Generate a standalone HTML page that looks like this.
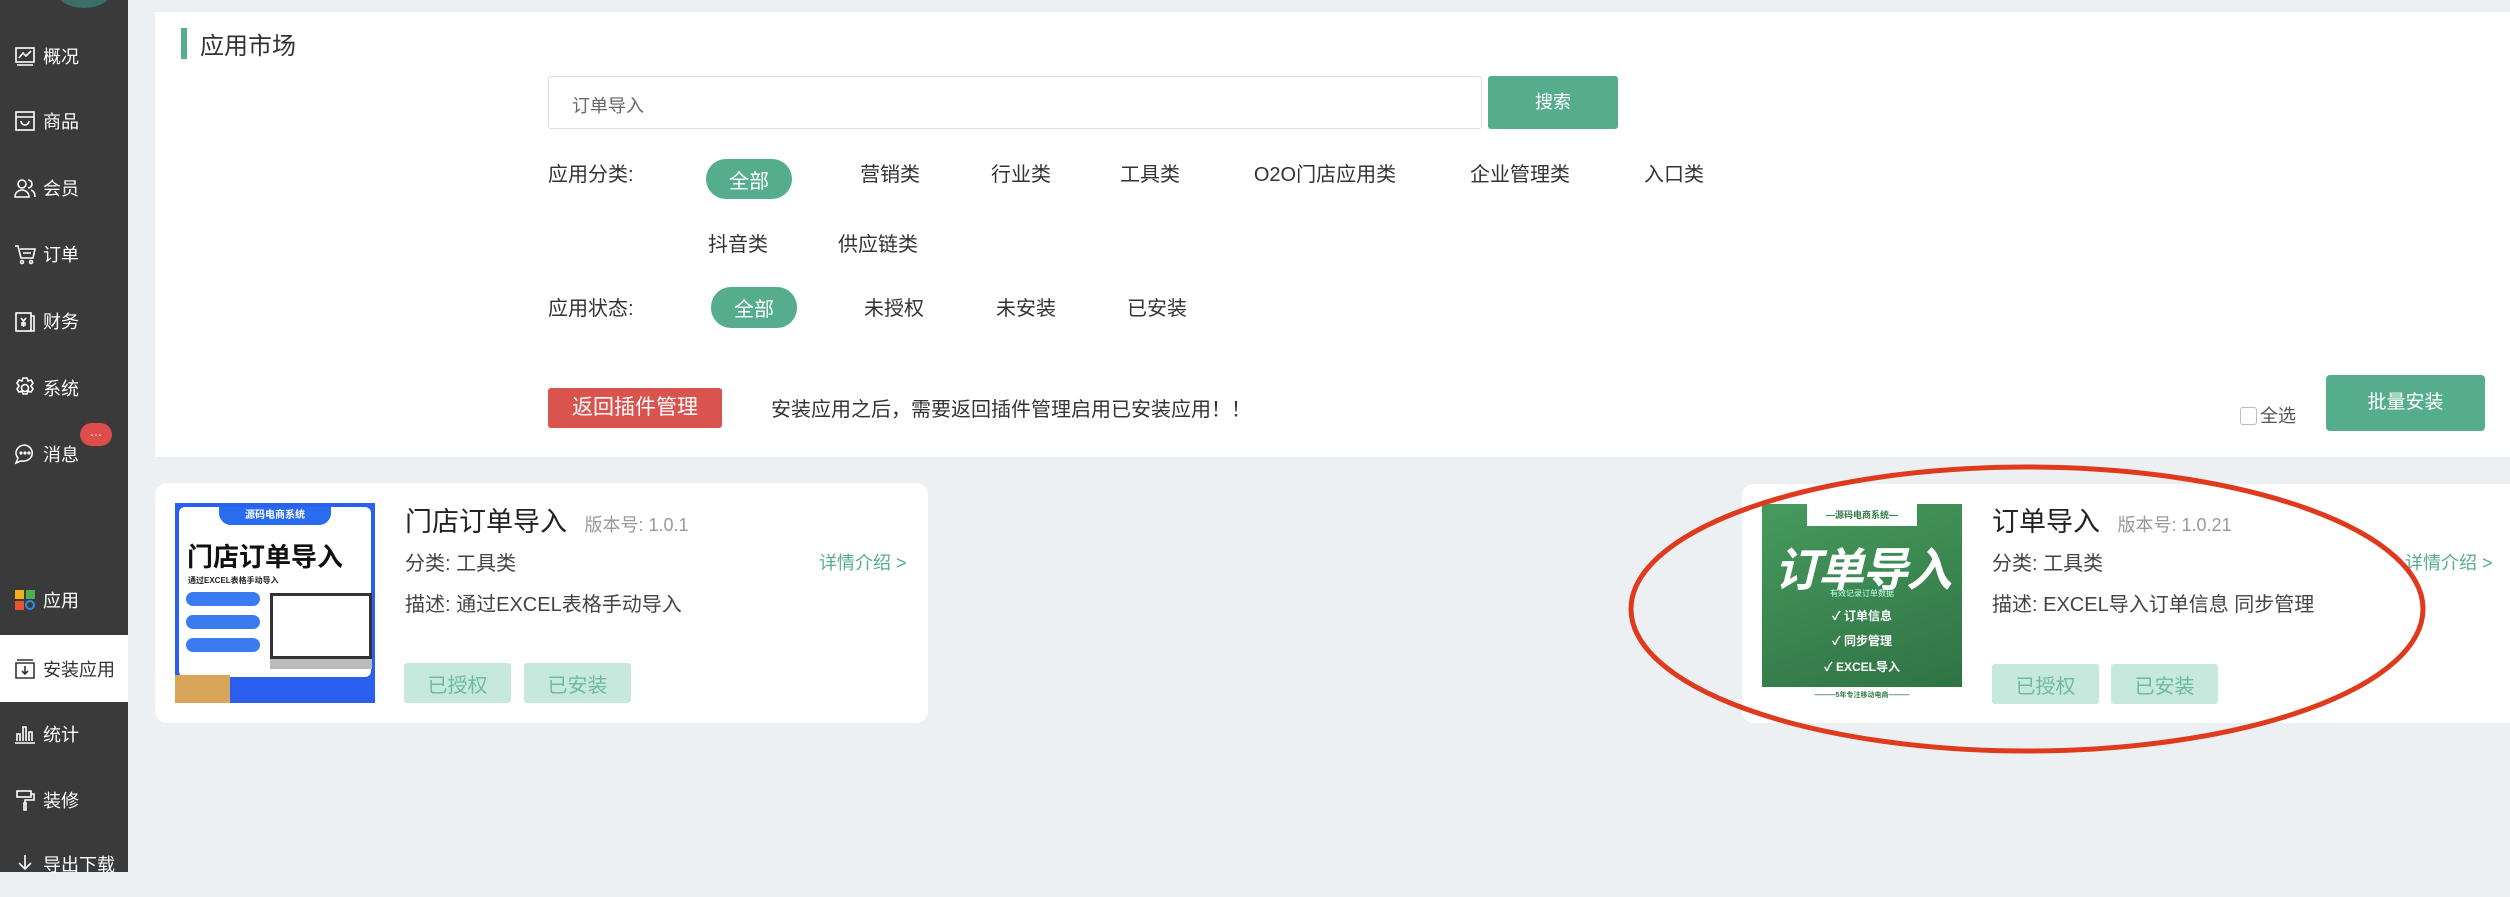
<!DOCTYPE html>
<html><head><meta charset="utf-8"><style>
*{margin:0;padding:0;box-sizing:border-box}
body{width:2510px;height:872px;overflow:hidden;background:#edf0f3;font-family:"Liberation Sans","Noto Sans CJK SC",sans-serif;position:relative;color:#333}
.abs{position:absolute}
.side{left:0;top:0;width:128px;height:872px;background:#3a3a3a}
.nav{position:absolute;left:0;width:128px;height:66px;color:#fff;font-size:18px;display:flex;align-items:center}
.nav svg{position:absolute;left:14px;width:22px;height:22px}
.nav span{position:absolute;left:43px}
.nav.act{background:#fff;color:#333}
.panel{left:155px;top:12px;width:2355px;height:445px;background:#fff}
.t{position:absolute;white-space:nowrap;font-size:20px;color:#333;transform:translateX(-50%)}
.pill{position:absolute;background:#55ad8d;color:#fff;border-radius:20px;font-size:20px;display:flex;align-items:center;justify-content:center}
.card{background:#fff;border-radius:12px}
.btn2{position:absolute;background:#c7e8dc;color:#6dbb9f;font-size:20px;display:flex;align-items:center;justify-content:center;border-radius:3px;width:107px;height:40px}
</style></head><body>
<div class="abs side">
 <div class="abs" style="left:58px;top:-20px;width:52px;height:28px;border-radius:50%;background:#3d6f6a"></div>
 <div class="nav" style="top:23px"><svg viewBox="0 0 22 22" fill="none" stroke="#fff" stroke-width="1.6"><rect x="2" y="3" width="18" height="14"/><path d="M5 13l4-5 3 3 5-5M3 20h16"/></svg><span>概况</span></div>
 <div class="nav" style="top:88px"><svg viewBox="0 0 22 22" fill="none" stroke="#fff" stroke-width="1.6"><rect x="2" y="2" width="18" height="18"/><path d="M2 7h18M7 11a4 4 0 008 0"/></svg><span>商品</span></div>
 <div class="nav" style="top:155px"><svg viewBox="0 0 22 22" fill="none" stroke="#fff" stroke-width="1.6"><circle cx="8" cy="7" r="4"/><path d="M1 20c0-5 4-7 7-7s7 2 7 7zM14 3a4 4 0 010 8M17 13c3 1 4 4 4 7"/></svg><span>会员</span></div>
 <div class="nav" style="top:221px"><svg viewBox="0 0 22 22" fill="none" stroke="#fff" stroke-width="1.6"><path d="M1 3h3l3 12h12l2-9H6M9 10h8"/><circle cx="8" cy="19" r="1.5"/><circle cx="17" cy="19" r="1.5"/></svg><span>订单</span></div>
 <div class="nav" style="top:288px"><svg viewBox="0 0 22 22" fill="none" stroke="#fff" stroke-width="1.6"><rect x="2" y="3" width="15" height="18"/><path d="M17 6h3v15h-3M7 8l2.5 3L12 8M9.5 11v6M7 13h5M7 15h5"/></svg><span>财务</span></div>
 <div class="nav" style="top:355px"><svg viewBox="0 0 22 22" fill="none" stroke="#fff" stroke-width="1.6"><circle cx="11" cy="11" r="3.5"/><path d="M9 1h4l1 3 3-1 2 3-2 3 2 3-2 3-3-1-1 3H9l-1-3-3 1-2-3 2-3-2-3 2-3 3 1z"/></svg><span>系统</span></div>
 <div class="nav" style="top:421px"><svg viewBox="0 0 22 22" fill="none" stroke="#fff" stroke-width="1.6"><path d="M11 2a9 8 0 00-7 13l-2 5 5-2a9 8 0 104-16z"/><circle cx="7" cy="10" r=".8"/><circle cx="11" cy="10" r=".8"/><circle cx="15" cy="10" r=".8"/></svg><span>消息</span></div>
 <div class="abs" style="left:80px;top:423px;width:32px;height:23px;border-radius:12px;background:#e04b4b;color:#fff;font-size:14px;text-align:center;line-height:16px">...</div>
 <div class="nav" style="top:567px"><svg viewBox="0 0 22 22"><rect x="1" y="1" width="9" height="9" fill="#f2b01e"/><rect x="12" y="1" width="9" height="9" fill="#4caf50"/><rect x="1" y="12" width="9" height="9" fill="#e8542f"/><circle cx="16" cy="16" r="4" fill="none" stroke="#2d8cf0" stroke-width="2"/></svg><span>应用</span></div>
 <div class="nav act" style="top:635px;height:67px"><svg viewBox="0 0 22 22" fill="none" stroke="#333" stroke-width="1.6"><path d="M3 2h16M2 5h18v15H2zM11 8v8M8 13l3 3 3-3"/></svg><span>安装应用</span></div>
 <div class="nav" style="top:701px"><svg viewBox="0 0 22 22" fill="none" stroke="#fff" stroke-width="1.6"><path d="M1 20h20M3 18v-7h3v7M9 18V4h3v14M15 18v-9h3v9"/></svg><span>统计</span></div>
 <div class="nav" style="top:767px"><svg viewBox="0 0 22 22" fill="none" stroke="#fff" stroke-width="1.6"><rect x="3" y="2" width="14" height="6"/><path d="M17 5h3v6h-9v3M10 14h2v7h-2z"/></svg><span>装修</span></div>
 <div class="nav" style="top:831px"><svg viewBox="0 0 22 22" fill="none" stroke="#fff" stroke-width="1.6"><path d="M11 2v14M5 10l6 6 6-6"/></svg><span>导出下载</span></div>
</div>

<div class="abs panel"></div>
<div class="abs" style="left:181px;top:28px;width:6px;height:31px;background:#55ad8d"></div>
<div class="abs" style="left:200px;top:26px;font-size:24px;color:#333">应用市场</div>
<div class="abs" style="left:548px;top:76px;width:934px;height:53px;border:1px solid #dcdfe6;border-radius:3px;font-size:18px;color:#666;padding:15px 23px">订单导入</div>
<div class="abs" style="left:1488px;top:76px;width:130px;height:53px;background:#55ad8d;border-radius:3px;color:#fff;font-size:18px;text-align:center;line-height:53px">搜索</div>

<div class="abs" style="left:548px;top:158px;font-size:20px">应用分类:</div>
<div class="pill" style="left:706px;top:159px;width:86px;height:40px">全部</div>
<div class="t" style="left:890px;top:158px">营销类</div>
<div class="t" style="left:1021px;top:158px">行业类</div>
<div class="t" style="left:1150px;top:158px">工具类</div>
<div class="t" style="left:1325px;top:158px">O2O门店应用类</div>
<div class="t" style="left:1520px;top:158px">企业管理类</div>
<div class="t" style="left:1674px;top:158px">入口类</div>
<div class="t" style="left:738px;top:228px">抖音类</div>
<div class="t" style="left:878px;top:228px">供应链类</div>
<div class="abs" style="left:548px;top:292px;font-size:20px">应用状态:</div>
<div class="pill" style="left:711px;top:287px;width:86px;height:41px">全部</div>
<div class="t" style="left:894px;top:292px">未授权</div>
<div class="t" style="left:1026px;top:292px">未安装</div>
<div class="t" style="left:1157px;top:292px">已安装</div>

<div class="abs" style="left:548px;top:388px;width:174px;height:40px;background:#d9534f;border-radius:3px;color:#fff;font-size:21px;text-align:center;line-height:40px">返回插件管理</div>
<div class="abs" style="left:771px;top:393px;font-size:20px">安装应用之后，需要返回插件管理启用已安装应用！！</div>
<div class="abs" style="left:2240px;top:407px;width:17px;height:18px;border:1px solid #bbb;border-radius:3px;background:#fff"></div>
<div class="abs" style="left:2260px;top:402px;font-size:18px;color:#555">全选</div>
<div class="abs" style="left:2326px;top:375px;width:159px;height:56px;background:#55ad8d;border-radius:4px;color:#fff;font-size:19px;text-align:center;line-height:56px">批量安装</div>

<!-- card 1 -->
<div class="abs card" style="left:155px;top:483px;width:773px;height:240px"></div>
<div class="abs" style="left:175px;top:503px;width:200px;height:200px;background:#2a5ff0;overflow:hidden">
 <div class="abs" style="left:4px;top:4px;width:192px;height:170px;background:#fff;border-radius:6px"></div>
 <div class="abs" style="left:44px;top:4px;width:112px;height:18px;background:#2a6cf0;border-radius:0 0 12px 12px;color:#fff;font-size:10px;text-align:center;line-height:18px;font-weight:bold">源码电商系统</div>
 <div class="abs" style="left:12px;top:34px;font-size:26px;font-weight:bold;color:#111">门店订单导入</div>
 <div class="abs" style="left:13px;top:72px;font-size:8px;font-weight:bold;color:#222">通过EXCEL表格手动导入</div>
 <div class="abs" style="left:11px;top:89px;width:74px;height:14px;background:#3a7bf2;border-radius:8px"></div>
 <div class="abs" style="left:11px;top:112px;width:74px;height:14px;background:#3a7bf2;border-radius:8px"></div>
 <div class="abs" style="left:11px;top:135px;width:74px;height:14px;background:#3a7bf2;border-radius:8px"></div>
 <div class="abs" style="left:95px;top:90px;width:102px;height:66px;background:#333;border:3px solid #333"><div style="background:#fff;width:100%;height:100%"></div></div>
 <div class="abs" style="left:95px;top:156px;width:102px;height:10px;background:#bbb"></div>
 <div class="abs" style="left:0;top:172px;width:55px;height:28px;background:#d8a55a"></div>
</div>
<div class="abs" style="left:405px;top:500px;font-size:27px;color:#222">门店订单导入 <span style="font-size:18px;color:#999;margin-left:10px">版本号: 1.0.1</span></div>
<div class="abs" style="left:405px;top:547px;font-size:20px;color:#444">分类: 工具类</div>
<div class="abs" style="left:405px;top:588px;font-size:20px;color:#444">描述: 通过EXCEL表格手动导入</div>
<div class="abs" style="left:819px;top:549px;font-size:18px;color:#55ad8d">详情介绍 &gt;</div>
<div class="btn2" style="left:404px;top:663px">已授权</div>
<div class="btn2" style="left:524px;top:663px">已安装</div>

<!-- card 2 -->
<div class="abs card" style="left:1742px;top:484px;width:780px;height:239px"></div>
<div class="abs" style="left:1762px;top:504px;width:200px;height:183px;background:linear-gradient(160deg,#479a5d,#2f7345);overflow:hidden;color:#fff;text-align:center">
 <div class="abs" style="left:45px;top:0;width:110px;height:22px;background:#fff;color:#2f7a45;font-size:9px;line-height:22px;font-weight:bold">—源码电商系统—</div>
 <div class="abs" style="left:0;top:30px;width:200px;font-size:46px;font-weight:bold;font-style:italic;letter-spacing:-2px">订单导入</div>
 <div class="abs" style="left:0;top:84px;width:200px;font-size:8px;color:#cfe">有效记录订单数据</div>
 <div class="abs" style="left:0;top:103px;width:200px;font-size:12px;font-weight:bold">✓ 订单信息</div>
 <div class="abs" style="left:0;top:128px;width:200px;font-size:12px;font-weight:bold">✓ 同步管理</div>
 <div class="abs" style="left:0;top:154px;width:200px;font-size:12px;font-weight:bold">✓ EXCEL导入</div>
</div>
<div class="abs" style="left:1762px;top:690px;width:200px;text-align:center;font-size:7px;color:#2f7a45;font-weight:bold">———5年专注移动电商———</div>
<div class="abs" style="left:1992px;top:500px;font-size:27px;color:#222">订单导入 <span style="font-size:18px;color:#999;margin-left:10px">版本号: 1.0.21</span></div>
<div class="abs" style="left:1992px;top:547px;font-size:20px;color:#444">分类: 工具类</div>
<div class="abs" style="left:1992px;top:588px;font-size:20px;color:#444">描述: EXCEL导入订单信息 同步管理</div>
<div class="abs" style="left:2405px;top:549px;font-size:18px;color:#55ad8d">详情介绍 &gt;</div>
<div class="btn2" style="left:1992px;top:664px">已授权</div>
<div class="btn2" style="left:2111px;top:664px">已安装</div>

<svg class="abs" style="left:0;top:0" width="2510" height="872"><ellipse cx="2027" cy="609" rx="396" ry="142" fill="none" stroke="#e03a1e" stroke-width="5"/></svg>
</body></html>
